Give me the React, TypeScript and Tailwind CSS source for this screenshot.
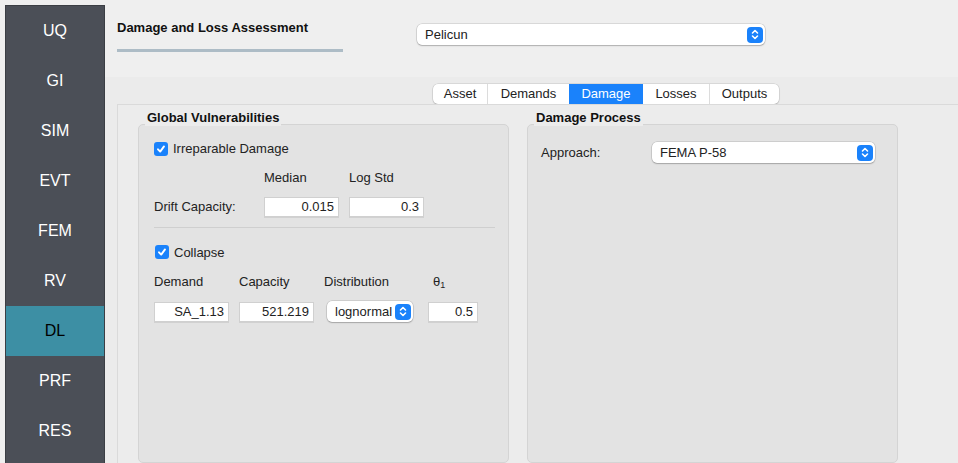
const font = { fontFamily: '"Liberation Sans", Arial, sans-serif' };

const navItems = ["UQ", "GI", "SIM", "EVT", "FEM", "RV", "DL", "PRF", "RES"];
const tabs = ["Asset", "Demands", "Damage", "Losses", "Outputs"];

const Stepper = () => (
  <div className="w-[16px] h-[16px] rounded-[4px] bg-[#1a82fb] flex items-center justify-center">
    <svg width="8" height="11" viewBox="0 0 8 11" fill="none" stroke="white" strokeWidth="1.6" strokeLinecap="round" strokeLinejoin="round">
      <path d="M1.5 4 L4 1.5 L6.5 4" />
      <path d="M1.5 7 L4 9.5 L6.5 7" />
    </svg>
  </div>
);

const Select = ({ value, className }: { value: string; className: string }) => (
  <div
    className={`h-[21px] bg-white rounded-[5px] shadow-[0_0_0_0.5px_rgba(0,0,0,0.18),0_1px_1.5px_rgba(0,0,0,0.2)] flex items-center justify-between pl-[8px] pr-[2px] text-[13px] text-[#222] ${className}`}
  >
    <span>{value}</span>
    <Stepper />
  </div>
);

const Check = ({ label }: { label: string }) => (
  <div className="flex items-center gap-[5px] text-[13px] text-[#222]">
    <div className="w-[14px] h-[14px] rounded-[3px] bg-[#1a82fb] flex items-center justify-center">
      <svg width="10" height="10" viewBox="0 0 10 10" fill="none" stroke="white" strokeWidth="1.9" strokeLinecap="round" strokeLinejoin="round">
        <path d="M2 5.3 L4.2 7.6 L8 2.4" />
      </svg>
    </div>
    <span>{label}</span>
  </div>
);

const Field = ({ value, className }: { value: string; className: string }) => (
  <div
    className={`h-[20px] bg-white border border-[#d0d0d0] shadow-[0_0.5px_0.5px_rgba(0,0,0,0.08)] flex items-center justify-end pr-[4px] text-[13px] text-[#222] ${className}`}
  >
    {value}
  </div>
);

const GroupBox = ({ title, className, children }: { title: string; className: string; children: React.ReactNode }) => (
  <div className={`flex flex-col ${className}`}>
    <div className="relative z-10 -mb-[2px] ml-[7px] self-start bg-[#ececec] px-[2px] text-[13px] font-bold leading-[16px] text-[#111]">
      {title}
    </div>
    <div className="flex-1 bg-[#e3e3e3] border border-[#d4d4d4] rounded-[5px]">{children}</div>
  </div>
);

export default function App() {
  return (
    <div className="w-[958px] h-[463px] overflow-hidden bg-[#efefef] flex" style={font}>
      <div className="ml-[5px] mt-[5px] w-[100px] shrink-0 bg-[#4b4f57] border border-[#3b3e44] border-b-0 flex flex-col">
        {navItems.map((n) => (
          <div
            key={n}
            className={`h-[50px] flex items-center justify-center text-[16px] ${
              n === "DL" ? "bg-[#3d8fa4] text-black" : "text-white"
            }`}
          >
            {n}
          </div>
        ))}
      </div>

      <div className="flex-1 flex flex-col min-w-0">
        <div className="h-[77px] flex pl-[12px] pt-[14px]">
          <div className="w-[226px] flex flex-col">
            <div className="text-[13px] font-bold text-[#111] leading-[16px] mt-[6px]">Damage and Loss Assessment</div>
            <div className="mt-[13px] h-[3px] bg-[#adbcc6]" />
          </div>
          <Select value="Pelicun" className="ml-[74px] mt-[10px] w-[348px]" />
        </div>

        <div className="flex-1 bg-[#ebebeb] flex flex-col">
          <div className="h-[27px] flex items-end">
            <div className="ml-[328px] h-[20px] flex bg-white rounded-[5px] shadow-[0_0_0_0.5px_rgba(0,0,0,0.15),0_1px_1.5px_rgba(0,0,0,0.15)] overflow-hidden text-[13px] text-[#222]">
              {tabs.map((t, i) => (
                <div
                  key={t}
                  className={`flex items-center justify-center ${
                    t === "Damage" ? "bg-[#1a82fb] text-white" : ""
                  } ${i > 0 && t !== "Damage" && tabs[i - 1] !== "Damage" ? "border-l border-[#dcdcdc]" : ""} ${
                    ["w-[54px]", "w-[82px]", "w-[74px]", "w-[66px]", "w-[70px]"][i]
                  }`}
                >
                  {t}
                </div>
              ))}
            </div>
          </div>

          <div className="flex-1 ml-[12px] border-l border-t border-[#dadada] bg-[#ececec] flex pl-[20px] pt-[5px] gap-[18px]">
            <GroupBox title="Global Vulnerabilities" className="w-[371px]">
              <div className="pl-[15px] pt-[14px] pr-[13px]">
                <Check label="Irreparable Damage" />
                <div className="flex pl-[110px] mt-[11px] text-[13px] text-[#222] leading-[16px]">
                  <div className="w-[85px]">Median</div>
                  <div>Log Std</div>
                </div>
                <div className="flex items-center mt-[11px] text-[13px] text-[#222]">
                  <div className="w-[110px]">Drift Capacity:</div>
                  <Field value="0.015" className="w-[75px]" />
                  <Field value="0.3" className="w-[75px] ml-[10px]" />
                </div>
                <div className="h-px bg-[#cfcfcf] mt-[10px]" />
                <div className="mt-[15px] ml-px">
                  <Check label="Collapse" />
                </div>
                <div className="flex mt-[12px] text-[13px] text-[#222] leading-[16px]">
                  <div className="w-[85px]">Demand</div>
                  <div className="w-[85px]">Capacity</div>
                  <div className="w-[109px]">Distribution</div>
                  <div>
                    θ<sub className="text-[9px]">1</sub>
                  </div>
                </div>
                <div className="flex items-center mt-[11px]">
                  <Field value="SA_1.13" className="w-[75px]" />
                  <Field value="521.219" className="w-[75px] ml-[10px]" />
                  <Select value="lognormal" className="w-[86px] ml-[13px] pl-[7px]" />
                  <Field value="0.5" className="w-[50px] ml-[15px]" />
                </div>
              </div>
            </GroupBox>

            <GroupBox title="Damage Process" className="w-[371px]">
              <div className="flex items-center pl-[13px] pt-[17px] text-[13px] text-[#222]">
                <div className="w-[111px]">Approach:</div>
                <Select value="FEMA P-58" className="w-[223px]" />
              </div>
            </GroupBox>
          </div>
        </div>
      </div>
    </div>
  );
}
